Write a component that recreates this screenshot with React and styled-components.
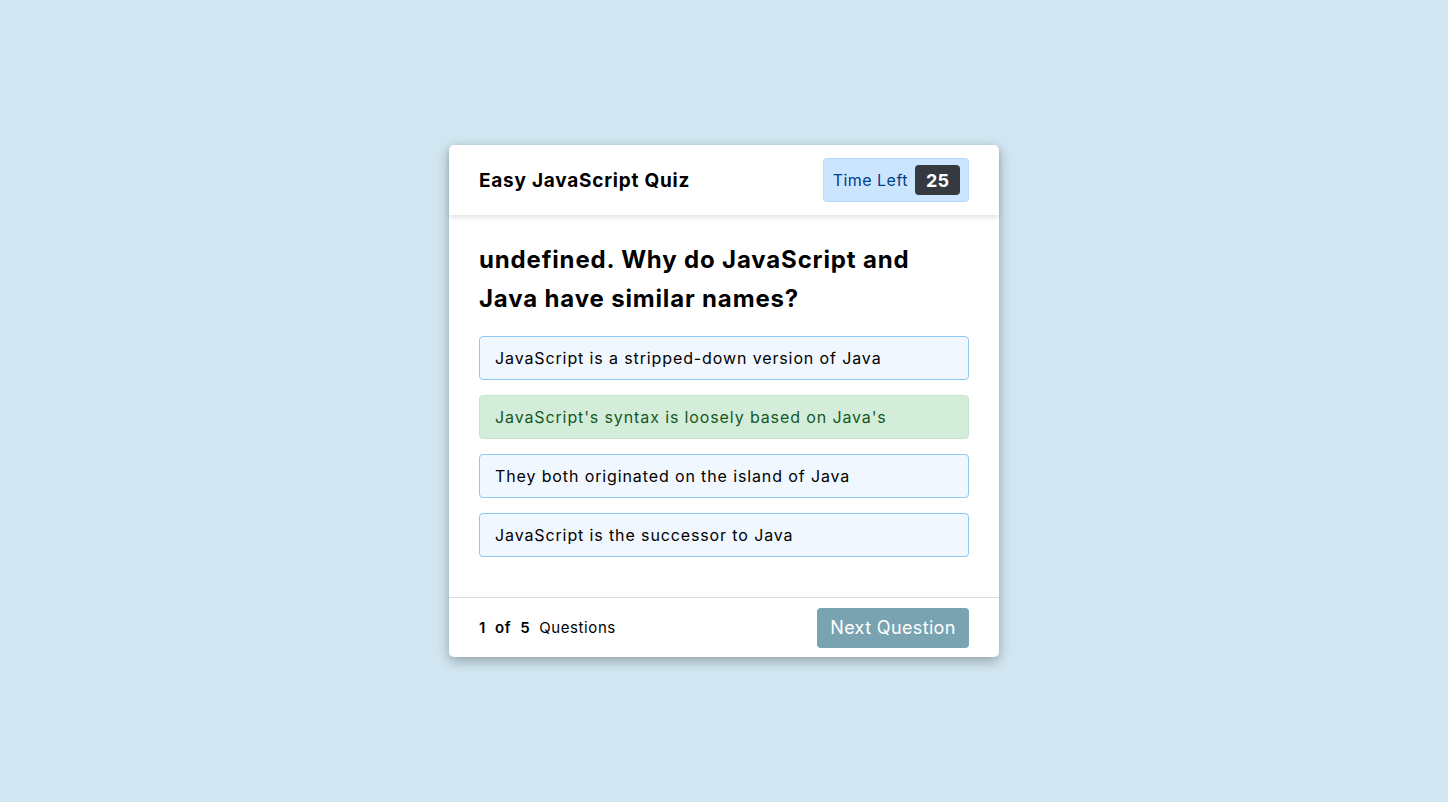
import React from "react"
import styled, { createGlobalStyle } from 'styled-components'

const GlobalStyle = createGlobalStyle`
* { box-sizing: border-box; }
body {
  margin: 0;
  background: #d1e6f1;
  font-family: 'Inter', 'Open Sans', sans-serif;
  color: #000;
}
`;

const Page = styled.div`
display: flex;
justify-content: center;
align-items: center;
min-height: 100vh;
`;

const Card = styled.div`
width: 550px;
background: #fff;
border-radius: 5px;
box-shadow: 0 4px 12px rgba(0, 0, 0, 0.3);
`;

const Header = styled.header`
display: flex;
justify-content: space-between;
align-items: center;
height: 70px;
padding: 0 30px;
box-shadow: 0 3px 5px rgba(0, 0, 0, 0.1);
position: relative;
`;

const Title = styled.h1`
margin: 0;
font-size: 19px;
font-weight: 700;
letter-spacing: 0.04em;
`;

const Timer = styled.div`
display: flex;
align-items: center;
gap: 7px;
height: 44px;
padding: 0 8px 0 9px;
background: #cce5ff;
border: 1px solid #b8daff;
border-radius: 4px;
color: #004085;
font-size: 16px;
letter-spacing: 0.03em;
`;

const Seconds = styled.span`
display: flex;
align-items: center;
justify-content: center;
width: 45px;
height: 30px;
background: #343a40;
color: #fff;
border-radius: 4px;
font-size: 18px;
font-weight: 700;
letter-spacing: 0;
`;

const Body = styled.div`
padding: 25px 30px 40px;
`;

const Question = styled.h2`
margin: 0 0 18px;
font-size: 24px;
line-height: 39px;
font-weight: 700;
letter-spacing: 0.035em;
`;

const Options = styled.ul`
list-style: none;
margin: 0;
padding: 0;
display: flex;
flex-direction: column;
gap: 15px;
`;

const Option = styled.li`
display: flex;
align-items: center;
height: 44px;
padding: 0 15px;
border-radius: 4px;
font-size: 16px;
letter-spacing: 0.055em;
background: ${p => p.$correct ? '#d4edda' : '#f0f7ff'};
border: 1px solid ${p => p.$correct ? '#c3e6cb' : '#8cc7f5'};
color: ${p => p.$correct ? '#155724' : '#000'};
`;

const Footer = styled.footer`
display: flex;
justify-content: space-between;
align-items: center;
height: 60px;
padding: 0 30px;
border-top: 1px solid #ddd;
`;

const Count = styled.div`
font-size: 15px;
letter-spacing: 0.04em;
b { font-weight: 600; margin-right: 9px; }
`;

const NextButton = styled.button`
width: 152px;
height: 40px;
border: none;
border-radius: 4px;
background: #79a3b1;
color: #fff;
font-family: inherit;
font-size: 18px;
letter-spacing: 0.02em;
`;

const options = [
  'JavaScript is a stripped-down version of Java',
  "JavaScript's syntax is loosely based on Java's",
  'They both originated on the island of Java',
  'JavaScript is the successor to Java',
];

const App = () => (
  <>
    <GlobalStyle />
    <Page>
      <Card>
        <Header>
          <Title>Easy JavaScript Quiz</Title>
          <Timer>Time Left <Seconds>25</Seconds></Timer>
        </Header>
        <Body>
          <Question>undefined. Why do JavaScript and Java have similar names?</Question>
          <Options>
            {options.map((o, i) => (
              <Option key={o} $correct={i === 1}>{o}</Option>
            ))}
          </Options>
        </Body>
        <Footer>
          <Count><b>1</b><b>of</b><b>5</b>Questions</Count>
          <NextButton>Next Question</NextButton>
        </Footer>
      </Card>
    </Page>
  </>
)

export default App;
